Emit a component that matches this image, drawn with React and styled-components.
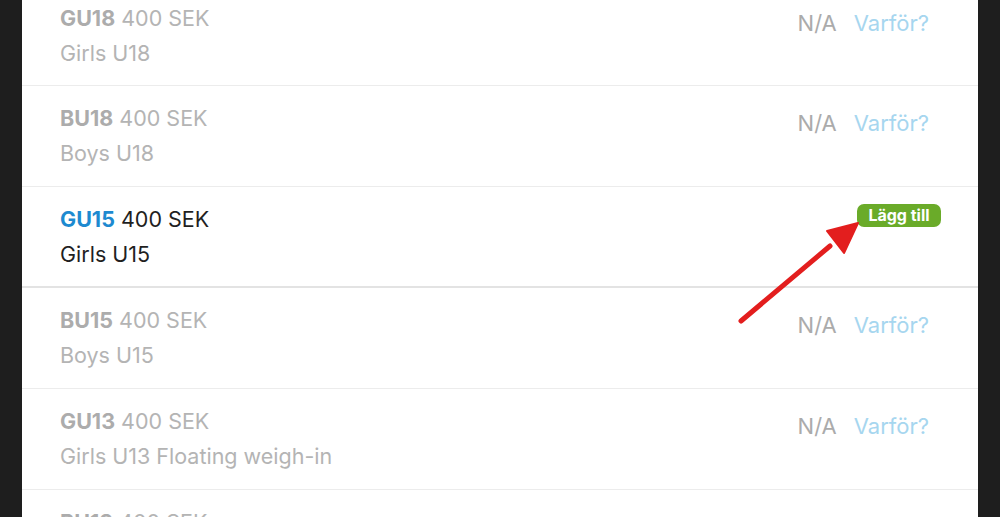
import React from 'react'
import styled, { createGlobalStyle } from 'styled-components'

const GlobalStyle = createGlobalStyle`
  html, body {
    margin: 0;
    height: 517px;
    overflow: hidden;
    background: #1e1e1e;
  }
  #root {
    height: 100%;
  }
`

const classes = [
  { code: 'GU18', price: '400 SEK', name: 'Girls U18', open: false },
  { code: 'BU18', price: '400 SEK', name: 'Boys U18', open: false },
  { code: 'GU15', price: '400 SEK', name: 'Girls U15', open: true },
  { code: 'BU15', price: '400 SEK', name: 'Boys U15', open: false },
  { code: 'GU13', price: '400 SEK', name: 'Girls U13 Floating weigh-in', open: false },
  { code: 'BU13', price: '400 SEK', name: 'Boys U13', open: false },
]

const App = () => {
  return (
    <>
      <GlobalStyle />
      <Panel>
        <List>
          {classes.map((c) => (
            <Row key={c.code} $open={c.open}>
              <Info>
                <Title $open={c.open}>
                  <Code $open={c.open}>{c.code}</Code> {c.price}
                </Title>
                <Name $open={c.open}>{c.name}</Name>
              </Info>
              {c.open ? (
                <AddButton>Lägg till</AddButton>
              ) : (
                <Status>
                  <NotAvailable>N/A</NotAvailable>
                  <Why href="#">Varför?</Why>
                </Status>
              )}
            </Row>
          ))}
        </List>
        <Arrow width="140" height="120" viewBox="0 0 140 120">
          <line x1="11" y1="108" x2="100" y2="33" stroke="#e31e1e" strokeWidth="5" strokeLinecap="round" />
          <polygon points="128,10 97,18 114,40" fill="#e31e1e" stroke="#e31e1e" strokeWidth="2" strokeLinejoin="round" />
        </Arrow>
      </Panel>
    </>
  )
}

const Panel = styled.div`
  position: relative;
  margin: 0 22px;
  height: 517px;
  background: #fff;
  overflow: hidden;
  font-family: Inter, "Noto Sans", sans-serif;
`

const List = styled.div`
  margin-top: -14px;
  display: flex;
  flex-direction: column;
`

const Row = styled.div`
  display: flex;
  justify-content: space-between;
  align-items: flex-start;
  height: 101px;
  box-sizing: border-box;
  padding: 15px 37px 0 38px;
  border-bottom: 1px solid #ececec;
  &:first-child {
    height: 100px;
  }
  ${(p) => p.$open && `
    border-bottom: 2px solid #e3e3e3;
  `}
`

const Info = styled.div`
  display: flex;
  flex-direction: column;
`

const Title = styled.div`
  font-size: 21.5px;
  line-height: 35px;
  color: ${(p) => (p.$open ? '#1f1f1f' : '#b4b4b4')};
`

const Code = styled.span`
  font-weight: 700;
  color: ${(p) => (p.$open ? '#1d8ad0' : '#acacac')};
`

const Name = styled.div`
  font-size: 21.5px;
  line-height: 35px;
  color: ${(p) => (p.$open ? '#1f1f1f' : '#b4b4b4')};
`

const Status = styled.div`
  display: flex;
  align-items: center;
  gap: 17px;
  margin-top: 5px;
  margin-right: 12px;
  font-size: 22px;
  line-height: 35px;
`

const NotAvailable = styled.span`
  color: #ababab;
`

const Why = styled.a`
  color: #a6d6ef;
  text-decoration: none;
`

const AddButton = styled.button`
  margin-top: 2px;
  height: 23px;
  width: 84px;
  padding: 0;
  border: none;
  border-radius: 7px;
  background: #6aab29;
  color: #fff;
  font-family: Inter, "Noto Sans", sans-serif;
  font-weight: 700;
  font-size: 16px;
  line-height: 23px;
  cursor: pointer;
`

const Arrow = styled.svg`
  position: absolute;
  left: 708px;
  top: 213px;
  pointer-events: none;
`

export default App
